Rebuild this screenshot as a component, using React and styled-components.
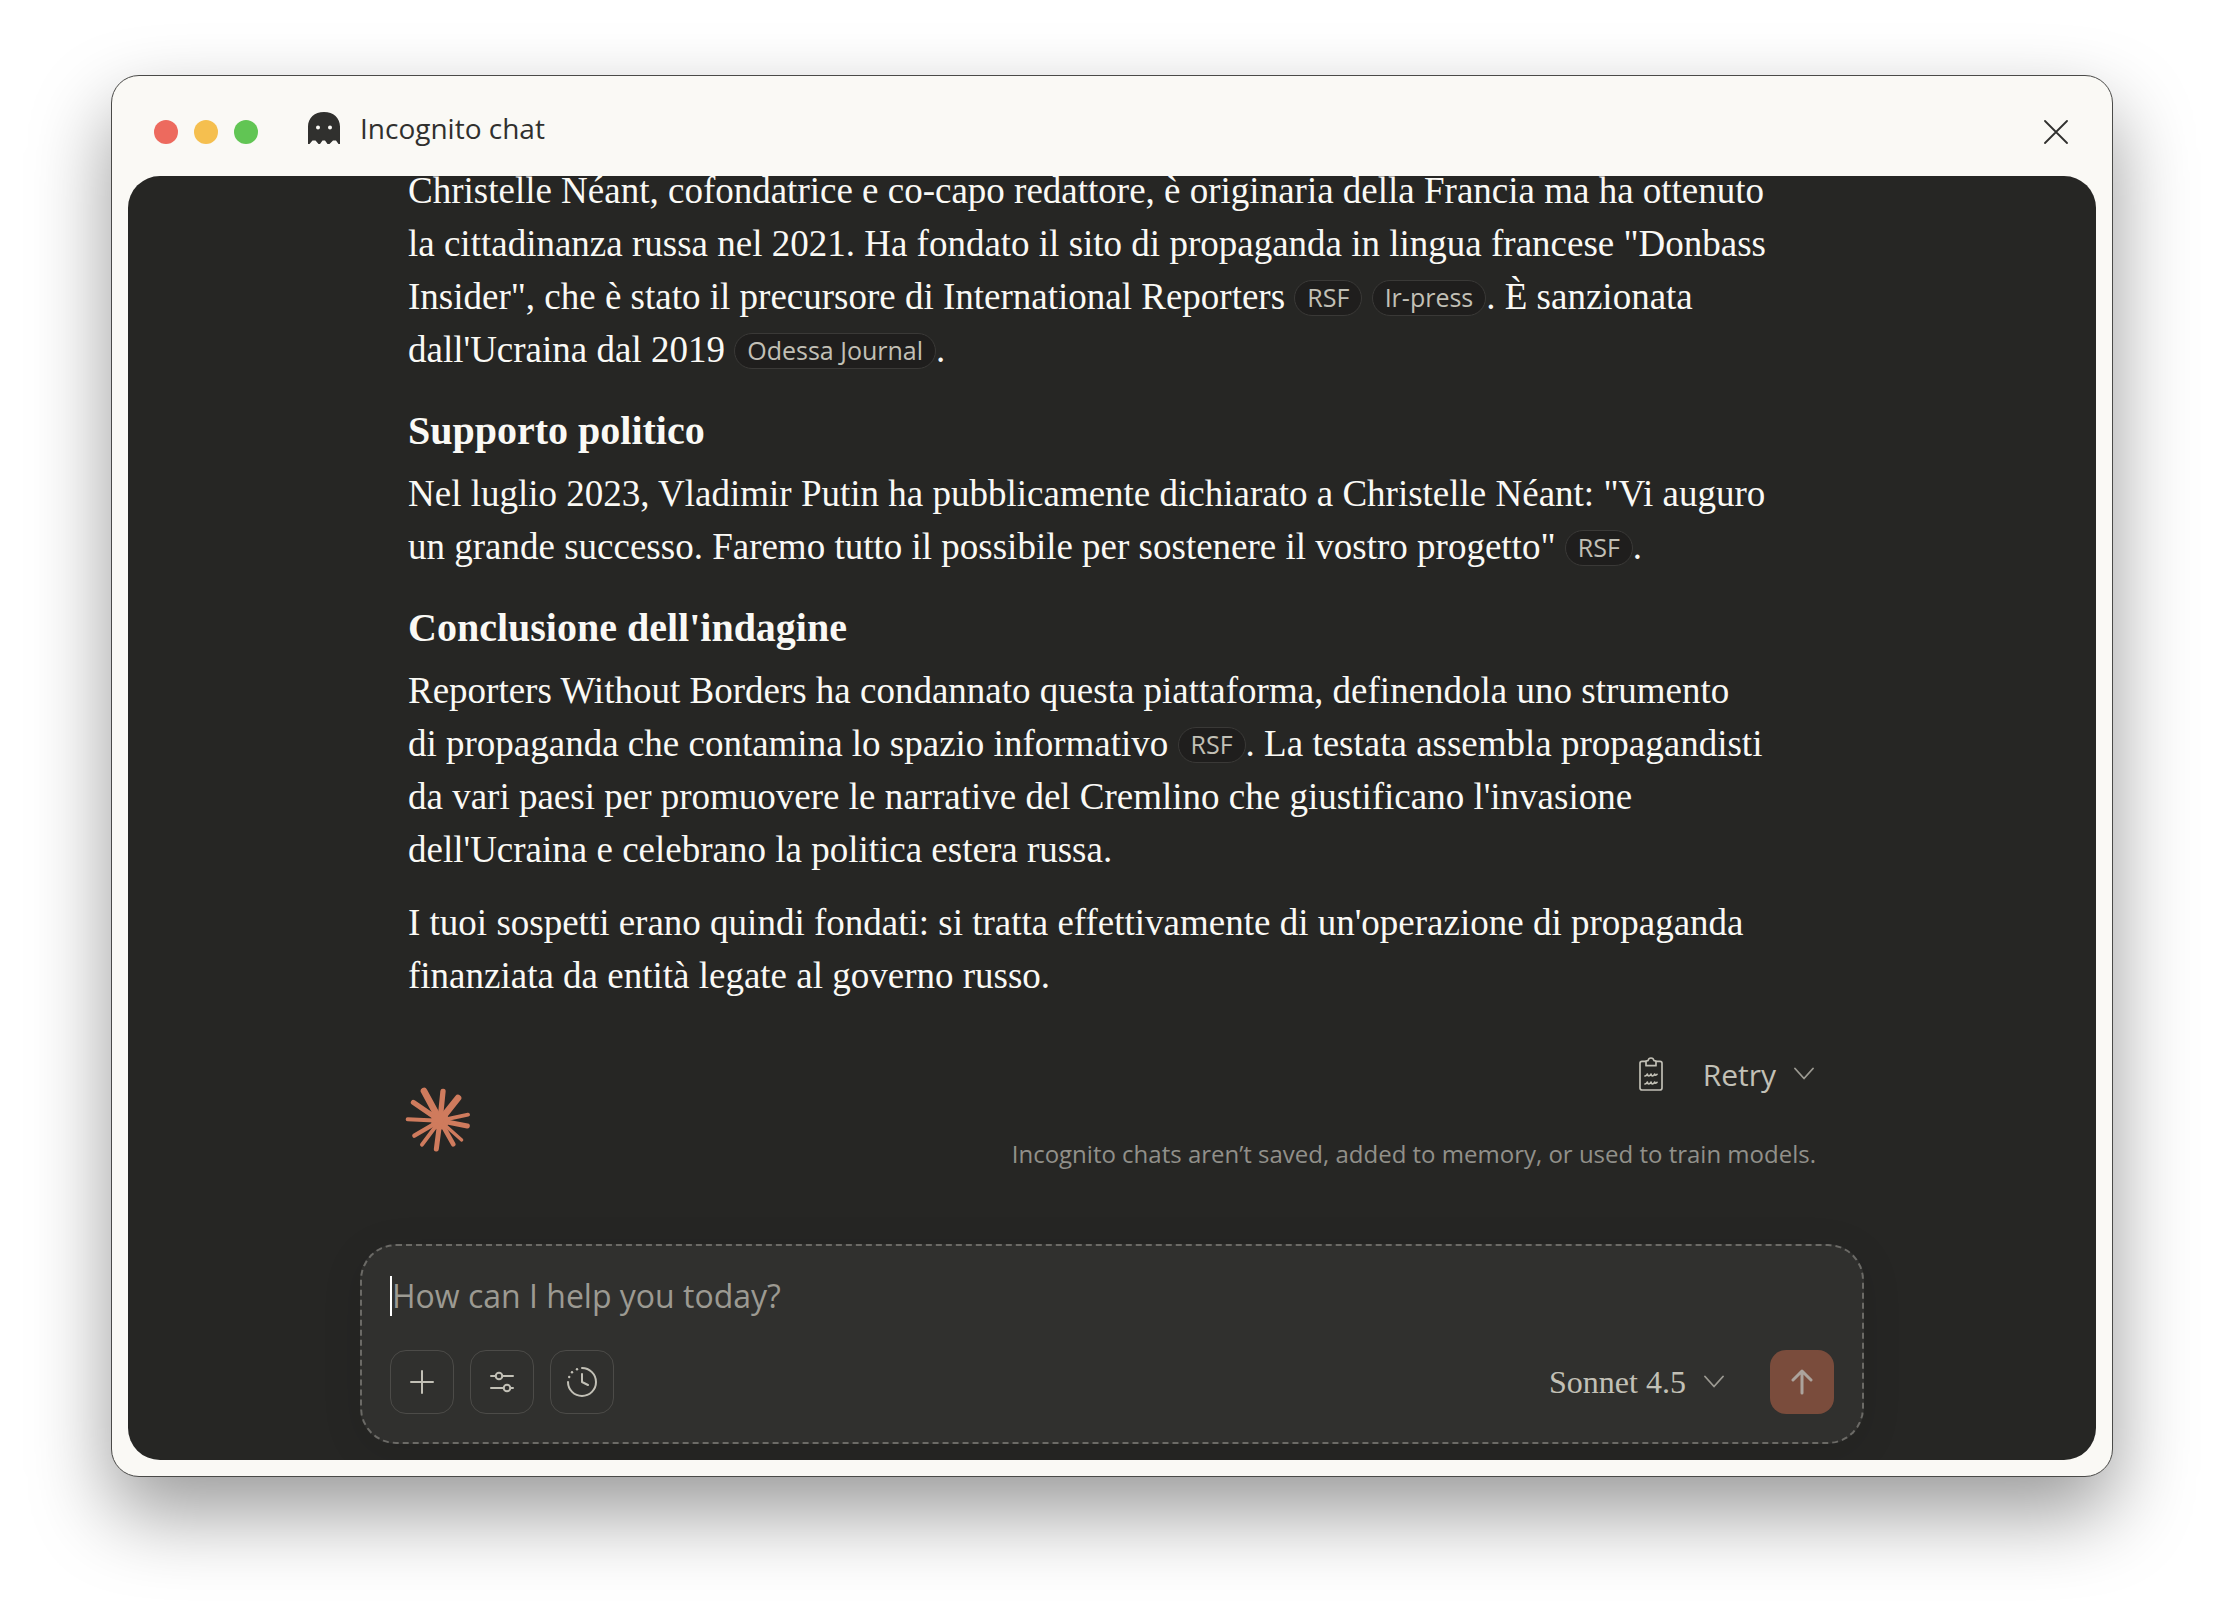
import React, { useState } from 'react';
import styled, { createGlobalStyle } from 'styled-components';

const RAYS = [
    [190, 65, 16], [235, 85, 20], [265, 135, 12], [263, 169, 15], [246, 211, 10], [221, 224, 14],
    [170, 238, 15], [127, 225, 12], [104, 198, 13], [84, 149, 12], [101, 98, 15], [133, 64, 20],
];

const Starburst = () => (
    <svg width="66" height="66" viewBox="76 52 198 198" stroke="#cf7b5d" strokeLinecap="round" fill="#cf7b5d" aria-hidden="true">
        <circle cx="181" cy="153" r="27" stroke="none" />
        {RAYS.map(([x, y, w]) => (
            <line key={`${x}-${y}`} x1="181" y1="153" x2={x} y2={y} strokeWidth={w} />
        ))}
    </svg>
);

const Ghost = () => (
    <svg width="32" height="32" viewBox="0 0 32 32" aria-hidden="true">
        <path
            fill="#30302e"
            fillRule="evenodd"
            d="M0 14.500C0 6 6.500 0 16 0s16 6 16 14.500V32h-1.500L28 28.500h-3L21.500 32h-2l-2.500-3.500h-2.500L12 32h-1.500L7.500 28.500h-3L1.500 32H0ZM10 13.500a2 2 0 1 0 0 4 2 2 0 0 0 0-4Zm12 0a2 2 0 1 0 0 4 2 2 0 0 0 0-4Z"
        />
    </svg>
);

const CloseIcon = () => (
    <svg width="24" height="24" viewBox="0 0 24 24" fill="none" stroke="#30302e" strokeWidth="1.800" strokeLinecap="round">
        <path d="M1 1l22 22M23 1L1 23" />
    </svg>
);

const ChevronIcon = () => (
    <svg width="20" height="14" viewBox="0 0 20 14" fill="none" stroke="#9c9a92" strokeWidth="1.800" strokeLinecap="round" strokeLinejoin="round" aria-hidden="true">
        <path d="M1 1.500l9 10 9-10" />
    </svg>
);

const ClipboardIcon = () => (
    <svg width="24" height="34" viewBox="0 0 72 102" fill="none" stroke="#c2c0b6" strokeWidth="5" strokeLinecap="round" strokeLinejoin="round">
        <path d="M20 13H9c-4 0-6 2-6 6v74c0 4 2 6 6 6h54c4 0 6-2 6-6V19c0-4-2-6-6-6H52" />
        <path d="M21 26V14c0-2 2-3 6-3 1-5 4-8 9-8s8 3 9 8c4 0 6 1 6 3v12Z" />
        <path d="M18 57c4-1 6-3 7-6 1 4 2 6 4 6 4-1 6-3 7-6 1 4 2 6 4 6 4-1 6-3 7-6 1 4 2 5 7 1" />
        <path d="M18 81c4-1 6-3 7-6 1 4 2 6 4 6 4-1 6-3 7-6 1 4 2 6 4 6 4-1 6-3 7-6 1 4 2 5 7 1" />
    </svg>
);

const PlusIcon = () => (
    <svg width="24" height="24" viewBox="0 0 24 24" fill="none" stroke="#c2c0b6" strokeWidth="2" strokeLinecap="round">
        <path d="M12 1v22M1 12h22" />
    </svg>
);

const SlidersIcon = () => (
    <svg width="24" height="24" viewBox="0 0 24 24" fill="none" stroke="#c2c0b6" strokeWidth="2" strokeLinecap="round">
        <path d="M1 6h4.500M12.500 6H23M1 18h12.500M20.500 18H23" />
        <circle cx="9" cy="6" r="3.300" />
        <circle cx="17" cy="18" r="3.300" />
    </svg>
);

const HistoryIcon = () => (
    <svg width="32" height="32" viewBox="0 0 32 32" fill="none" stroke="#c2c0b6" strokeWidth="2" strokeLinecap="round" strokeLinejoin="round">
        <path d="M16 2a14 14 0 1 1-14 14M16 8v8l6 3" />
        <g fill="#c2c0b6" stroke="none">
            <circle cx="11" cy="3.200" r="1.200" />
            <circle cx="6" cy="6.200" r="1.200" />
            <circle cx="3.200" cy="11" r="1.200" />
        </g>
    </svg>
);

const ArrowUpIcon = () => (
    <svg width="22" height="26" viewBox="0 0 22 26" fill="none" stroke="#aca39c" strokeWidth="3" strokeLinecap="round" strokeLinejoin="round">
        <path d="M11 24V2M2 11l9-9 9 9" />
    </svg>
);

const App = () => {
    const [prompt, setPrompt] = useState('');
    const [model, setModel] = useState('Sonnet 4.5');

    return (
        <Page>
            <GlobalStyle />
            <Window>
                <TitleBar>
                    <Lights>
                        <Light $color="#ed6a5e" aria-label="Close window" />
                        <Light $color="#f5bf4f" aria-label="Minimize window" />
                        <Light $color="#61c554" aria-label="Zoom window" />
                    </Lights>
                    <Title>
                        <Ghost />
                        <TitleText>Incognito chat</TitleText>
                    </Title>
                    <CloseButton aria-label="Close incognito chat">
                        <CloseIcon />
                    </CloseButton>
                </TitleBar>

                <Panel>
                    <Messages>
                        <Answer>
                            <p>
                                Christelle Néant, cofondatrice e co-capo redattore, è originaria della Francia ma ha ottenuto
                                <br />
                                la cittadinanza russa nel 2021. Ha fondato il sito di propaganda in lingua francese "Donbass
                                <br />
                                Insider", che è stato il precursore di International Reporters <Source href="#rsf">RSF</Source>{' '}
                                <Source href="#ir-press">Ir-press</Source>. È sanzionata
                                <br />
                                dall'Ucraina dal 2019 <Source href="#odessa-journal">Odessa Journal</Source>.
                            </p>
                            <h2>Supporto politico</h2>
                            <p>
                                Nel luglio 2023, Vladimir Putin ha pubblicamente dichiarato a Christelle Néant: "Vi auguro
                                <br />
                                un grande successo. Faremo tutto il possibile per sostenere il vostro
                                progetto" <Source href="#rsf">RSF</Source>.
                            </p>
                            <h2>Conclusione dell'indagine</h2>
                            <p>
                                Reporters Without Borders ha condannato questa piattaforma, definendola uno strumento
                                <br />
                                di propaganda che contamina lo spazio informativo <Source href="#rsf">RSF</Source>. La
                                testata assembla propagandisti
                                <br />
                                da vari paesi per promuovere le narrative del Cremlino che giustificano l'invasione
                                <br />
                                dell'Ucraina e celebrano la politica estera russa.
                            </p>
                            <p>
                                I tuoi sospetti erano quindi fondati: si tratta effettivamente di un'operazione di propaganda
                                <br />
                                finanziata da entità legate al governo russo.
                            </p>
                        </Answer>

                        <AnswerFooter>
                            <Logo>
                                <Starburst />
                            </Logo>
                            <FooterRight>
                                <Actions>
                                    <ActionButton aria-label="Copy">
                                        <ClipboardIcon />
                                    </ActionButton>
                                    <ActionButton>
                                        Retry
                                        <ChevronIcon />
                                    </ActionButton>
                                </Actions>
                                <Disclaimer>Incognito chats aren’t saved, added to memory, or used to train models.</Disclaimer>
                            </FooterRight>
                        </AnswerFooter>
                    </Messages>

                    <Composer onSubmit={(e) => e.preventDefault()}>
                        <PromptRow>
                            <Caret />
                            <PromptInput
                                type="text"
                                aria-label="Message"
                                value={prompt}
                                onChange={(e) => setPrompt(e.target.value)}
                                placeholder="How can I help you today?"
                            />
                        </PromptRow>
                        <Toolbar>
                            <ToolButton type="button" aria-label="Add content">
                                <PlusIcon />
                            </ToolButton>
                            <ToolButton type="button" aria-label="Search and tools">
                                <SlidersIcon />
                            </ToolButton>
                            <ToolButton type="button" aria-label="Extended thinking">
                                <HistoryIcon />
                            </ToolButton>
                            <ModelPicker>
                                <ModelSelect aria-label="Model" value={model} onChange={(e) => setModel(e.target.value)}>
                                    <option>Sonnet 4.5</option>
                                </ModelSelect>
                                <ChevronIcon />
                            </ModelPicker>
                            <SendButton type="submit" aria-label="Send message">
                                <ArrowUpIcon />
                            </SendButton>
                        </Toolbar>
                    </Composer>
                </Panel>
            </Window>
        </Page>
    );
};

export default App;

// Styled Components
const GlobalStyle = createGlobalStyle`
    * {
        box-sizing: border-box;
    }

    body {
        margin: 0;
        background-color: #ffffff;
        font-family: 'Open Sans', 'Noto Sans', sans-serif;
    }

    button, input, select {
        margin: 0;
        padding: 0;
        border: none;
        background: none;
        font-family: inherit;
        color: inherit;
    }

    button {
        cursor: pointer;
    }

    svg {
        display: block;
        flex-shrink: 0;
    }
`;

const Page = styled.div`
    display: flex;
    height: 100vh;
    padding: 75px 111px 147px;
`;

const Window = styled.div`
    display: flex;
    flex-direction: column;
    flex: 1;
    min-width: 0;
    padding: 0 16px 16px;
    background-color: #faf9f5;
    border: 1px solid #4a4a48;
    border-radius: 28px;
    box-shadow: 0 36px 80px rgba(0, 0, 0, 0.4);
`;

const TitleBar = styled.header`
    display: flex;
    align-items: center;
    height: 100px;
    padding: 12px 28px 0 26px;
    color: #30302e;
`;

const Lights = styled.div`
    display: flex;
    gap: 16px;
    margin-right: 50px;
`;

const Light = styled.button`
    width: 24px;
    height: 24px;
    border-radius: 50%;
    background-color: ${({ $color }) => $color};
`;

const Title = styled.div`
    display: flex;
    align-items: center;
    gap: 20px;
    padding-bottom: 8px;
`;

const TitleText = styled.h1`
    margin: 0;
    font-size: 28px;
    line-height: 36px;
    font-weight: 400;
`;

const CloseButton = styled.button`
    margin-left: auto;
`;

const Panel = styled.main`
    display: flex;
    flex-direction: column;
    flex: 1;
    min-height: 0;
    padding: 0 16px 16px;
    overflow: hidden;
    background-color: #262624;
    border-radius: 32px;
`;

/* keeps the newest message in view, older lines are cut at the top */
const Messages = styled.section`
    display: flex;
    flex-direction: column;
    justify-content: flex-end;
    flex: 1;
    min-height: 0;
    width: 100%;
    max-width: 1408px;
    margin: 0 auto;
    padding-bottom: 74px;
`;

const Answer = styled.article`
    font-family: 'Liberation Serif', serif;
    font-size: 37px;
    line-height: 53px;
    color: #faf9f5;

    p {
        margin: 0;
    }

    p + p {
        margin-top: 20px;
    }

    h2 {
        margin: 31px 0 12px;
        font-size: 40px;
        line-height: 48px;
        font-weight: 700;
    }
`;

const Source = styled.a`
    display: inline-block;
    height: 36px;
    padding: 0 12px;
    vertical-align: 2px;
    background-color: #1f1e1d;
    border: 1px solid #3a3937;
    border-radius: 18px;
    font-family: 'Open Sans', sans-serif;
    font-size: 25px;
    line-height: 32px;
    color: #c2c0b6;
    text-decoration: none;
`;

const AnswerFooter = styled.footer`
    display: flex;
    align-items: flex-end;
    justify-content: space-between;
    margin-top: 40px;
`;

const Logo = styled.div`
    margin: 0 0 17px -3px;
`;

const FooterRight = styled.div`
    display: flex;
    flex-direction: column;
    align-items: flex-end;
    gap: 32px;
`;

const Actions = styled.div`
    display: flex;
    gap: 40px;
    padding-right: 2px;
`;

const ActionButton = styled.button`
    display: flex;
    align-items: center;
    gap: 18px;
    height: 64px;
    font-size: 30px;
    color: #c2c0b6;
`;

const Disclaimer = styled.p`
    margin: 0;
    font-size: 24px;
    line-height: 32px;
    color: #91908a;
`;

const Composer = styled.form`
    display: flex;
    flex-direction: column;
    gap: 32px;
    width: 100%;
    max-width: 1504px;
    margin: 0 auto;
    padding: 28px;
    background-color: #30302e;
    border: 2px dashed #6b6a66;
    border-radius: 36px;
    box-shadow: 0 8px 40px rgba(0, 0, 0, 0.1);
`;

const PromptRow = styled.div`
    display: flex;
    align-items: center;
    height: 44px;
`;

const Caret = styled.span`
    width: 2px;
    height: 40px;
    background-color: #ffffff;
`;

const PromptInput = styled.input`
    flex: 1;
    font-size: 32px;
    line-height: 44px;
    color: #faf9f5;
    outline: none;

    &::placeholder {
        color: #9c9a92;
        opacity: 1;
    }
`;

const Toolbar = styled.div`
    display: flex;
    align-items: center;
    gap: 16px;
`;

const ToolButton = styled.button`
    display: flex;
    align-items: center;
    justify-content: center;
    width: 64px;
    height: 64px;
    border: 1px solid #4c4b48;
    border-radius: 16px;
`;

const ModelPicker = styled.label`
    display: flex;
    align-items: center;
    gap: 18px;
    margin-left: auto;
    margin-right: 30px;
`;

const ModelSelect = styled.select`
    appearance: none;
    font-family: 'Liberation Serif', serif;
    font-size: 32px;
    line-height: 40px;
    color: #c2c0b6;
`;

const SendButton = styled(ToolButton)`
    border: none;
    background-color: #7a4c3c;
`;
